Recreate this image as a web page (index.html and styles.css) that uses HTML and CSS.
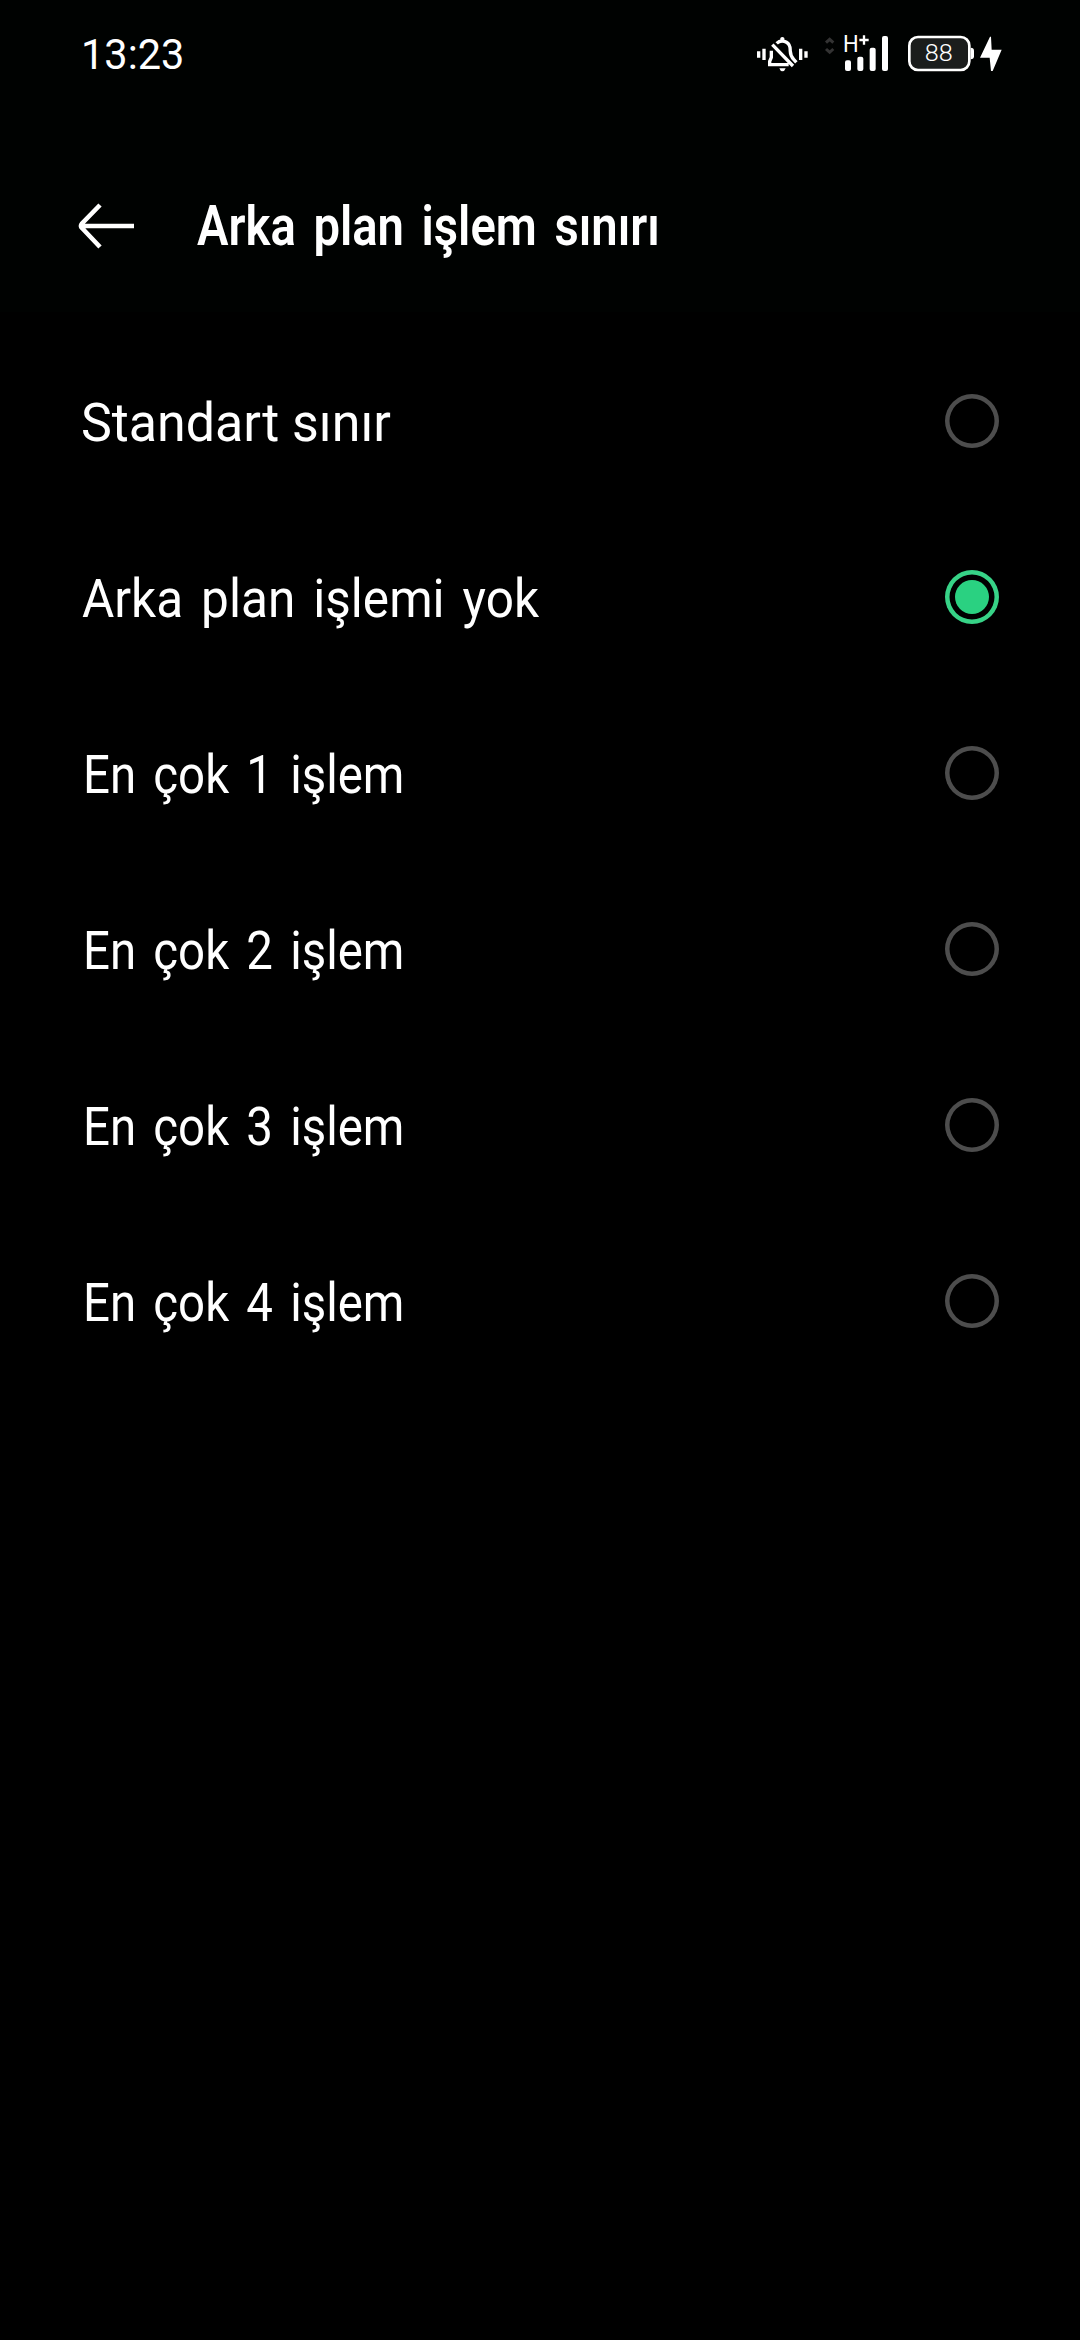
FILE: index.html
```html
<!DOCTYPE html>
<html lang="tr">
<head>
<meta charset="utf-8">
<title>Arka plan işlem sınırı</title>
<link rel="stylesheet" href="styles.css">
</head>
<body>
<div class="top">
  <div class="status">
    <span class="clock">13:23</span>
    <svg class="indicators" viewBox="0 0 840 210" fill="#fff">
      <g stroke="#fff" stroke-width="10" fill="none">
        <path d="M56 94v19M72 86v34M182 86v34M198 94v19"/>
        <path d="M110 70C122 58 146 62 150 82C152 98 148 104 161 118L169 127M97 74L159 138M94 92V112L89 124V134H146"/>
      </g>
      <path d="M121 62V54Q127 48 133 54V62zM118 145H137Q134 154 127 154Q121 154 118 145z"/>
      <path d="M258 68L269 58L280 68M258 87L269 97L280 87" fill="none" stroke="#333" stroke-width="9"/>
      <text class="network" x="309" y="97" textLength="47" lengthAdjust="spacingAndGlyphs">H</text>
      <path d="M372 46V74M358 60H386" stroke="#fff" stroke-width="7"/>
      <rect x="315" y="121" width="18" height="32" rx="6"/>
      <rect x="352" y="110" width="18" height="43" rx="6"/>
      <rect x="389" y="83" width="18" height="70" rx="6"/>
      <rect x="426" y="48" width="18" height="105" rx="6"/>
      <rect x="508" y="51" width="180" height="99" rx="26" fill="#1b1d1c" stroke="#fff" stroke-width="8"/>
      <path d="M692 83Q702 83 702 92V109Q702 118 692 118z"/>
      <text class="level" x="554" y="124" textLength="84" lengthAdjust="spacingAndGlyphs">88</text>
      <path d="M750 50L720 113H749L753 153H758L785 89H755L753 50z"/>
    </svg>
  </div>
  <header class="bar">
    <svg class="back" viewBox="0 0 58 46" fill="none" stroke="#fff" stroke-width="4.6"><path d="M22 2L4 20.500Q2 23 4 25L22 44M4 23H56"/></svg>
    <h1 class="title">Arka plan işlem sınırı</h1>
  </header>
</div>
<main class="list">
  <div class="row"><span class="label standard">Standart sınır</span><i class="radio"></i></div>
  <div class="row"><span class="label none">Arka plan işlemi yok</span><i class="radio on"></i></div>
  <div class="row"><span class="label">En çok 1 işlem</span><i class="radio"></i></div>
  <div class="row"><span class="label">En çok 2 işlem</span><i class="radio"></i></div>
  <div class="row"><span class="label">En çok 3 işlem</span><i class="radio"></i></div>
  <div class="row"><span class="label">En çok 4 işlem</span><i class="radio"></i></div>
</main>
</body>
</html>
```
FILE: styles.css
```css
* { box-sizing: border-box; }
body {
  margin: 0;
  min-height: 2340px;
  background: #000;
  color: #fff;
  font-family: Roboto, "Open Sans", sans-serif;
}
.top { height: 333px; background: linear-gradient(#000201 312px, #000 312px); }
.status {
  height: 108px;
  padding: 20px 60px 0 81px;
  display: flex;
  justify-content: space-between;
}
.clock {
  font-size: 43px;
  line-height: 68px;
  transform: scaleX(0.965);
  transform-origin: left center;
}
.indicators { width: 280px; height: 70px; }
.network { font-size: 72px; }
.level { font-size: 74px; font-weight: 300; }
.bar {
  height: 236px;
  padding: 0 78px;
  display: flex;
  align-items: center;
}
.back { width: 58px; height: 46px; }
.title {
  margin: 0 0 0 61px;
  font-size: 56px;
  line-height: 70px;
  font-weight: 600;
  word-spacing: 7px;
  white-space: nowrap;
  transform: scaleX(0.843);
  transform-origin: left center;
}
.row {
  height: 176px;
  padding: 0 81px 0 83px;
  display: flex;
  align-items: center;
  justify-content: space-between;
}
.label {
  padding-top: 3px;
  font-size: 53px;
  line-height: 70px;
  word-spacing: 6px;
  white-space: nowrap;
  transform: scaleX(0.895);
  transform-origin: left center;
}
.standard { margin-left: -2px; word-spacing: 0; transform: scaleX(0.98); }
.none { margin-left: -1px; transform: scaleX(0.935); }
.radio {
  width: 54px;
  height: 54px;
  border-radius: 50%;
  box-shadow: inset 0 0 0 4.500px #4d4d4d;
  display: grid;
  place-items: center;
}
.on { box-shadow: inset 0 0 0 4.500px #37d387; }
.on::after {
  content: "";
  width: 34px;
  height: 34px;
  border-radius: 50%;
  background: #2ad181;
}
```
